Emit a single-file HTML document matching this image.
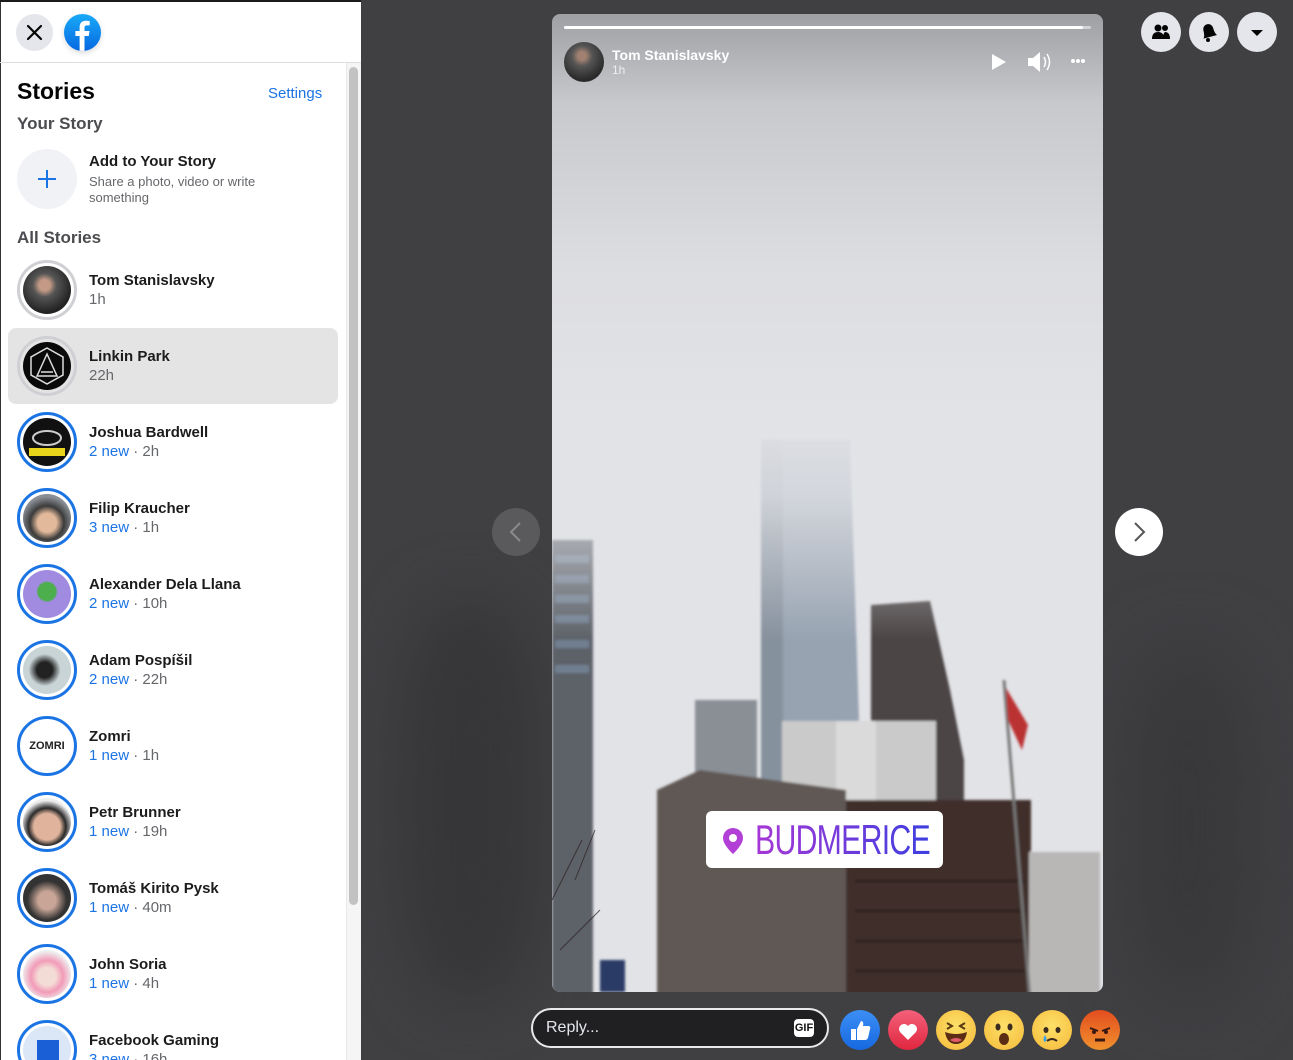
<!DOCTYPE html>
<html><head><meta charset="utf-8"><style>
*{margin:0;padding:0;box-sizing:border-box}
body{width:1293px;height:1060px;overflow:hidden;background:#3e3e41;font-family:"Liberation Sans",Helvetica,Arial,sans-serif;position:relative}
.abs{position:absolute}
#left{position:absolute;left:0;top:0;width:361px;height:1060px;background:#fff;border-top:2px solid #1b1b1b;overflow:hidden}
#left:before{content:"";position:absolute;left:0;top:0;width:1px;height:1060px;background:#333}
.topbar{position:absolute;left:0;top:0;width:361px;height:61px;border-bottom:1px solid #dedede}
.close{position:absolute;left:16px;top:12px;width:37px;height:37px;border-radius:50%;background:#e4e6eb}
.fb{position:absolute;left:64px;top:12px;width:37px;height:37px;border-radius:50%;background:linear-gradient(#19aaf8,#0668e1);box-shadow:0 2px 6px rgba(0,0,0,.15);overflow:hidden}
.scroll{position:absolute;left:346px;top:61px;width:15px;height:1000px;background:#f5f5f5;border-left:1px solid #e8e8e8}
.thumb{position:absolute;left:349px;top:65px;width:9px;height:838px;border-radius:5px;background:#c2c2c2}
h1{position:absolute;left:17px;top:76px;font-size:23px;font-weight:bold;color:#050505}
.set{position:absolute;left:268px;top:83px;font-size:15px;color:#1b74e4}
.sub{position:absolute;left:17px;font-size:17px;font-weight:bold;color:#4b4c4f}
.item{position:absolute;left:8px;width:330px;height:76px;border-radius:8px}
.item.sel{background:#e4e4e4}
.av{position:absolute;left:9px;top:8px;width:60px;height:60px;border-radius:50%;border:3px solid #cfd0d3;padding:3px;background:#fff}
.item.sel .av{background:#e4e4e4}
.av.new{border-color:#1b74e4}
.av>div{width:100%;height:100%;border-radius:50%;overflow:hidden}
.nm{position:absolute;left:81px;top:20px;font-size:15px;font-weight:bold;color:#1c1c1c;white-space:nowrap}
.tm{position:absolute;left:81px;top:39px;font-size:15px;color:#65676b;white-space:nowrap}
.tm b{font-weight:normal;color:#1b74e4}
.rbtn{position:absolute;top:12px;width:40px;height:40px;border-radius:50%;background:#e4e6eb}
</style></head><body>

<div class="abs" style="left:362px;top:0;width:931px;height:1060px;background:#404043"></div>
<div class="abs" style="left:400px;top:600px;width:140px;height:400px;background:#363638;filter:blur(30px);border-radius:40%"></div>
<div class="abs" style="left:1130px;top:650px;width:120px;height:350px;background:#38383a;filter:blur(35px);border-radius:40%"></div>

<div id="left">
 <div class="topbar">
  <div class="close"><svg width="37" height="37" viewBox="0 0 37 37"><path d="M12 12L25 25M25 12L12 25" stroke="#050505" stroke-width="2.2" stroke-linecap="round"/></svg></div>
  <div class="fb"><svg width="37" height="37" viewBox="0 0 37 37"><path d="M20.5 37V22h4.3l.7-5h-5v-3.2c0-1.5.5-2.4 2.5-2.4h2.7V7c-.6-.1-2-.3-3.8-.3-3.9 0-6.3 2.3-6.3 6.5V17H11.4v5h4.2v15z" fill="#fff"/></svg></div>
 </div>
 <div class="scroll"></div><div class="thumb"></div>
 <h1>Stories</h1>
 <div class="set">Settings</div>
 <div class="sub" style="top:112px">Your Story</div>
 <div class="abs" style="left:17px;top:147px;width:60px;height:60px;border-radius:50%;background:#f0f2f5"><svg width="60" height="60"><path d="M30 21v18M21 30h18" stroke="#1b74e4" stroke-width="2"/></svg></div>
 <div class="nm" style="left:89px;top:151px">Add to Your Story</div>
 <div class="abs" style="left:89px;top:172px;font-size:13px;color:#65676b;line-height:16px;width:200px">Share a photo, video or write something</div>
 <div class="sub" style="top:226px">All Stories</div>

 <div class="item" style="top:250px"><div class="av"><div style="background:radial-gradient(circle at 45% 40%,#c49a86 0 14%,#555 30%,#222 70%)"></div></div><div class="nm">Tom Stanislavsky</div><div class="tm">1h</div></div>
 <div class="item sel" style="top:326px"><div class="av"><div style="background:#0a0a0a"><svg width="48" height="48" viewBox="0 0 48 48"><path d="M24 6L40 15v18L24 42 8 33V15z" fill="none" stroke="#ddd" stroke-width="1.5"/><path d="M14 34l10-22 10 22zM18 30h12" fill="none" stroke="#ddd" stroke-width="1.5"/></svg></div></div><div class="nm">Linkin Park</div><div class="tm">22h</div></div>
 <div class="item" style="top:402px"><div class="av new"><div style="background:#111"><svg width="48" height="48"><ellipse cx="24" cy="20" rx="14" ry="7" fill="none" stroke="#ccc" stroke-width="2"/><rect x="6" y="30" width="36" height="8" fill="#e8d41a"/></svg></div></div><div class="nm">Joshua Bardwell</div><div class="tm"><b>2 new</b> · 2h</div></div>
 <div class="item" style="top:478px"><div class="av new"><div style="background:radial-gradient(circle at 50% 60%,#e2b99a 0 25%,#3b3b3b 45%,#8a8f96 70%)"></div></div><div class="nm">Filip Kraucher</div><div class="tm"><b>3 new</b> · 1h</div></div>
 <div class="item" style="top:554px"><div class="av new"><div style="background:radial-gradient(circle at 50% 45%,#4cae4c 0 25%,#a08be0 30%)"></div></div><div class="nm">Alexander Dela Llana</div><div class="tm"><b>2 new</b> · 10h</div></div>
 <div class="item" style="top:630px"><div class="av new"><div style="background:radial-gradient(circle at 45% 50%,#222 0 22%,#c9d4d6 45%)"></div></div><div class="nm">Adam Pospíšil</div><div class="tm"><b>2 new</b> · 22h</div></div>
 <div class="item" style="top:706px"><div class="av new"><div style="background:#fff;font-size:11px;font-weight:bold;text-align:center;line-height:48px;color:#222">ZOMRI</div></div><div class="nm">Zomri</div><div class="tm"><b>1 new</b> · 1h</div></div>
 <div class="item" style="top:782px"><div class="av new"><div style="background:radial-gradient(circle at 50% 60%,#e0b49c 0 35%,#2a2a2a 50%,#eee 70%)"></div></div><div class="nm">Petr Brunner</div><div class="tm"><b>1 new</b> · 19h</div></div>
 <div class="item" style="top:858px"><div class="av new"><div style="background:radial-gradient(circle at 50% 55%,#c8a596 0 25%,#333 55%)"></div></div><div class="nm">Tomáš Kirito Pysk</div><div class="tm"><b>1 new</b> · 40m</div></div>
 <div class="item" style="top:934px"><div class="av new"><div style="background:radial-gradient(circle at 50% 55%,#f4dcd6 0 25%,#f29bb8 45%,#eee 70%)"></div></div><div class="nm">John Soria</div><div class="tm"><b>1 new</b> · 4h</div></div>
 <div class="item" style="top:1010px"><div class="av new"><div style="background:#dbe6f7"><div style="margin:14px 0 0 14px;width:22px;height:34px;background:#1a5fd6"></div></div></div><div class="nm">Facebook Gaming</div><div class="tm"><b>3 new</b> · 16h</div></div>
</div>

<div class="abs" style="left:552px;top:14px;width:551px;height:978px;border-radius:8px;overflow:hidden;background:linear-gradient(#9fa0a4 0,#c8c9cd 90px,#dcdde1 250px,#e2e3e7 400px,#e2e3e7 978px)">
 <svg class="abs" style="left:0;top:0" width="551" height="978" viewBox="552 14 551 978">
  <defs><linearGradient id="fog" x1="0" y1="0" x2="0" y2="1"><stop offset="0" stop-color="#e2e3e7" stop-opacity="1"/><stop offset=".4" stop-color="#e2e3e7" stop-opacity=".8"/><stop offset="1" stop-color="#e2e3e7" stop-opacity="0"/></linearGradient>
  <filter id="b"><feGaussianBlur stdDeviation="1.2"/></filter></defs>
  <g filter="url(#b)">
  <rect x="695" y="700" width="62" height="300" fill="#8a8f96"/>
  <polygon points="761,440 850,440 868,1000 761,1000" fill="#97a3b1"/>
  <rect x="761" y="440" width="22" height="560" fill="#86919e"/>
  <polygon points="871,605 930,601 950,690 964,760 964,1000 871,1000" fill="#4c4445"/>
  <rect x="782" y="721" width="154" height="280" fill="#cacaca"/>
  <rect x="836" y="721" width="40" height="100" fill="#dadada"/>
  <polygon points="657,790 700,770 846,790 846,1000 657,1000" fill="#615955"/>
  <rect x="846" y="800" width="185" height="200" fill="#3f2f2c"/>
  <rect x="1029" y="852" width="71" height="148" fill="#b9b7b6"/>
  <rect x="552" y="540" width="41" height="460" fill="#5d6269"/>
  <g fill="#6f7f90"><rect x="555" y="555" width="34" height="8"/><rect x="555" y="575" width="34" height="8"/><rect x="555" y="595" width="34" height="8"/><rect x="555" y="615" width="34" height="8"/><rect x="555" y="640" width="34" height="8"/><rect x="555" y="665" width="34" height="8"/></g>
  <g fill="#221a18"><rect x="855" y="880" width="170" height="2"/><rect x="855" y="910" width="170" height="2"/><rect x="855" y="940" width="170" height="2"/><rect x="855" y="970" width="170" height="2"/></g>
  <line x1="1004" y1="680" x2="1030" y2="1000" stroke="#777" stroke-width="3"/>
  <polygon points="1006,688 1028,725 1022,750 1008,720" fill="#b33"/>
  <rect x="600" y="960" width="25" height="32" fill="#2a3b66"/>
  </g>
  <rect x="552" y="400" width="551" height="240" fill="url(#fog)"/>
  <g stroke="#2a1d1a" stroke-width="1" fill="none" opacity=".7"><path d="M552 900l30-60M575 880l20-50M560 950l40-40"/></g>
 </svg>
 <div class="abs" style="left:12px;top:12px;width:527px;height:3px;border-radius:2px;background:rgba(255,255,255,.5)"><div style="width:519px;height:3px;background:#fff;border-radius:2px"></div></div>
 <div class="abs" style="left:12px;top:28px;width:40px;height:40px;border-radius:50%;background:radial-gradient(circle at 45% 35%,#a08070 0 12%,#555 30%,#2a2a2a 70%)"></div>
 <div class="abs" style="left:60px;top:33px;font-size:14px;font-weight:bold;color:#fff">Tom Stanislavsky</div>
 <div class="abs" style="left:60px;top:49px;font-size:12px;color:#eee">1h</div>
 <svg class="abs" style="left:438px;top:38px" width="18" height="20"><path d="M2 2L16 10L2 18z" fill="#fff"/></svg>
 <svg class="abs" style="left:474px;top:36px" width="28" height="24"><path d="M2 8h5l7-6v20l-7-6H2z" fill="#fff"/><path d="M18 7q3 5 0 10M21 4q5 8 0 16" stroke="#fff" stroke-width="1.5" fill="none"/></svg>
 <svg class="abs" style="left:518px;top:44px" width="16" height="6"><circle cx="3" cy="3" r="2" fill="#fff"/><circle cx="8" cy="3" r="2" fill="#fff"/><circle cx="13" cy="3" r="2" fill="#fff"/></svg>
 <div class="abs" style="left:154px;top:797px;width:237px;height:57px;border-radius:6px;background:#fff">
  <svg class="abs" style="left:14px;top:16px" width="26" height="28"><path d="M13 1a10 10 0 0 1 10 10c0 7-10 16-10 16S3 18 3 11A10 10 0 0 1 13 1z" fill="#b23fd6"/><circle cx="13" cy="11" r="4" fill="#fff"/></svg>
  <div class="abs" style="left:49px;top:5px;font-size:42px;line-height:48px;letter-spacing:-1px;transform:scaleX(.72);transform-origin:left;white-space:nowrap;background:linear-gradient(90deg,#a637d6,#3d3ee0);-webkit-background-clip:text;color:transparent">BUDMERICE</div>
 </div>
</div>

<div class="abs" style="left:492px;top:508px;width:48px;height:48px;border-radius:50%;background:#5a5a5c"><svg width="48" height="48"><path d="M28 15L19 24L28 33" stroke="#8a8a8c" stroke-width="2" fill="none"/></svg></div>
<div class="abs" style="left:1115px;top:508px;width:48px;height:48px;border-radius:50%;background:#fff"><svg width="48" height="48"><path d="M20 15L29 24L20 33" stroke="#555" stroke-width="2" fill="none"/></svg></div>

<div class="rbtn" style="left:1141px"><svg width="40" height="40"><circle cx="17" cy="16" r="3.5" fill="#050505"/><circle cx="24" cy="16" r="3" fill="#050505"/><path d="M11 27q0-7 6-7t6 7zM22 27q0-6 2-7 5 0 5 7z" fill="#050505"/></svg></div>
<div class="rbtn" style="left:1189px"><svg width="40" height="40"><path d="M13 25q2-2 2-8a5 5 0 0 1 10 0q0 6 2 8z" fill="#050505" transform="rotate(-15 20 20)"/><circle cx="19" cy="28" r="2" fill="#050505"/></svg></div>
<div class="rbtn" style="left:1237px"><svg width="40" height="40"><path d="M14 18h12l-6 6z" fill="#050505"/></svg></div>

<div class="abs" style="left:531px;top:1008px;width:298px;height:40px;border:2px solid #e8e8e8;border-radius:20px;background:#202022"></div>
<div class="abs" style="left:546px;top:1019px;font-size:16px;color:#e4e6eb">Reply...</div>
<div class="abs" style="left:794px;top:1019px;width:20px;height:18px;border-radius:4px;background:#fff;font-size:11px;font-weight:bold;color:#111;text-align:center;line-height:18px">GIF</div>
<div class="abs" style="left:840px;top:1010px;width:40px;height:40px;border-radius:50%;background:linear-gradient(#3c8ef5,#1669e0)"><svg width="40" height="40"><path d="M11 19h5v11h-5zM17 19l4-8q3 0 2 5h6q2 1 1 3l-2 9q-1 2-3 2h-8z" fill="#fff"/></svg></div>
<div class="abs" style="left:888px;top:1010px;width:40px;height:40px;border-radius:50%;background:linear-gradient(#f4617b,#e1263f)"><svg width="40" height="40"><path d="M20 30l-8-8a4.5 4.5 0 0 1 8-6 4.5 4.5 0 0 1 8 6z" fill="#fff"/></svg></div>
<div class="abs" style="left:936px;top:1010px;width:40px;height:40px;border-radius:50%;background:radial-gradient(circle at 50% 40%,#fde068,#f5b93a)"><svg width="40" height="40"><path d="M11 13l5 3-5 3M29 13l-5 3 5 3" stroke="#5a3a10" stroke-width="2" fill="none"/><path d="M9 22q11 4 22 0q-2 12-11 12T9 22z" fill="#5c2d14"/><path d="M14 30q6-4 12 0q-6 4-12 0z" fill="#e35a6a"/></svg></div>
<div class="abs" style="left:984px;top:1010px;width:40px;height:40px;border-radius:50%;background:radial-gradient(circle at 50% 40%,#fde068,#f5b93a)"><svg width="40" height="40"><ellipse cx="14" cy="17" rx="2.5" ry="3.5" fill="#3a2a20"/><ellipse cx="26" cy="17" rx="2.5" ry="3.5" fill="#3a2a20"/><ellipse cx="20" cy="29" rx="5" ry="6" fill="#5c2d14"/></svg></div>
<div class="abs" style="left:1032px;top:1010px;width:40px;height:40px;border-radius:50%;background:radial-gradient(circle at 50% 40%,#fde068,#f5b93a)"><svg width="40" height="40"><ellipse cx="14" cy="20" rx="2.5" ry="3" fill="#3a2a20"/><ellipse cx="26" cy="20" rx="2.5" ry="3" fill="#3a2a20"/><path d="M15 31q5-4 10 0" stroke="#3a2a20" stroke-width="2" fill="none"/><path d="M13 25q-3 5 0 7q3-2 0-7z" fill="#3aa0e8"/></svg></div>
<div class="abs" style="left:1080px;top:1010px;width:40px;height:40px;border-radius:50%;background:linear-gradient(#e34d1e,#f0912e)"><svg width="40" height="40"><path d="M10 18l8 3M30 18l-8 3" stroke="#3a1a10" stroke-width="2"/><ellipse cx="14" cy="22" rx="2" ry="2" fill="#3a1a10"/><ellipse cx="26" cy="22" rx="2" ry="2" fill="#3a1a10"/><path d="M15 30h10" stroke="#3a1a10" stroke-width="3"/></svg></div>

</body></html>
